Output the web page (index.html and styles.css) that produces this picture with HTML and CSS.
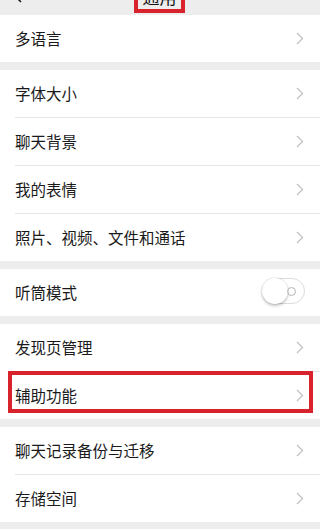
FILE: index.html
```html
<!DOCTYPE html>
<html lang="zh-CN">
<head>
<meta charset="utf-8">
<title>通用</title>
<link rel="stylesheet" href="styles.css">
</head>
<body>
<header class="navbar">
  <div class="nav-left">
    <svg class="back" width="10" height="18" viewBox="0 0 10 18"><polyline points="9,1 1,9 9,17" fill="none" stroke="#222" stroke-width="1.6"/></svg>
  </div>
  <div class="nav-title"><span>通用</span></div>
  <div class="nav-right"></div>
</header>

<section class="group">
  <div class="row"><span class="label">多语言</span><svg class="chev" width="8" height="13" viewBox="0 0 8 13"><polyline points="1,1 6.5,6.5 1,12" fill="none" stroke="#c2c2c2" stroke-width="1.3"/></svg></div>
</section>

<section class="group">
  <div class="row"><span class="label">字体大小</span><svg class="chev" width="8" height="13" viewBox="0 0 8 13"><polyline points="1,1 6.5,6.5 1,12" fill="none" stroke="#c2c2c2" stroke-width="1.3"/></svg></div>
  <div class="row"><span class="label">聊天背景</span><svg class="chev" width="8" height="13" viewBox="0 0 8 13"><polyline points="1,1 6.5,6.5 1,12" fill="none" stroke="#c2c2c2" stroke-width="1.3"/></svg></div>
  <div class="row"><span class="label">我的表情</span><svg class="chev" width="8" height="13" viewBox="0 0 8 13"><polyline points="1,1 6.5,6.5 1,12" fill="none" stroke="#c2c2c2" stroke-width="1.3"/></svg></div>
  <div class="row"><span class="label">照片、视频、文件和通话</span><svg class="chev" width="8" height="13" viewBox="0 0 8 13"><polyline points="1,1 6.5,6.5 1,12" fill="none" stroke="#c2c2c2" stroke-width="1.3"/></svg></div>
</section>

<section class="group">
  <div class="row"><span class="label">听筒模式</span>
    <span class="switch"><span class="knob"></span><span class="off-dot"></span></span>
  </div>
</section>

<section class="group">
  <div class="row"><span class="label">发现页管理</span><svg class="chev" width="8" height="13" viewBox="0 0 8 13"><polyline points="1,1 6.5,6.5 1,12" fill="none" stroke="#c2c2c2" stroke-width="1.3"/></svg></div>
  <div class="row highlighted"><span class="label">辅助功能</span><svg class="chev" width="8" height="13" viewBox="0 0 8 13"><polyline points="1,1 6.5,6.5 1,12" fill="none" stroke="#c2c2c2" stroke-width="1.3"/></svg><span class="mark"></span></div>
</section>

<section class="group">
  <div class="row"><span class="label">聊天记录备份与迁移</span><svg class="chev" width="8" height="13" viewBox="0 0 8 13"><polyline points="1,1 6.5,6.5 1,12" fill="none" stroke="#c2c2c2" stroke-width="1.3"/></svg></div>
  <div class="row"><span class="label">存储空间</span><svg class="chev" width="8" height="13" viewBox="0 0 8 13"><polyline points="1,1 6.5,6.5 1,12" fill="none" stroke="#c2c2c2" stroke-width="1.3"/></svg></div>
</section>
</body>
</html>
```

FILE: styles.css
```css
html, body {
  margin: 0;
  padding: 0;
}
body {
  background: #ededed;
  font-family: "Noto Sans CJK SC", "Noto Sans", sans-serif;
  color: #1a1a1a;
  width: 320px;
  height: 529px;
  overflow: hidden;
}
.navbar {
  height: 15px;
  display: grid;
  grid-template-columns: 1fr auto 1fr;
  overflow: hidden;
  background: #ededed;
}
.nav-left {
  position: relative;
}
.back {
  display: block;
  margin-left: 12px;
  margin-top: -15px;
}
.nav-title {
  display: flex;
  align-items: flex-end;
  justify-content: center;
  box-sizing: border-box;
  width: 51px;
  height: 43px;
  margin-top: -30px;
  border: 4px solid #d8232d;
  padding-bottom: 4px;
  font-size: 17px;
  line-height: 1;
  color: #111;
  margin-left: -1px;
}
.group {
  background: #fff;
  padding-left: 15px;
  margin-bottom: 8px;
}
.row {
  position: relative;
  display: flex;
  align-items: center;
  justify-content: space-between;
  height: 47px;
  padding-right: 16px;
  font-size: 15.5px;
}
.row + .row {
  border-top: 1px solid #e5e5e5;
}
.label {
  line-height: 1;
}
.chev {
  display: block;
}
.switch {
  position: relative;
  display: block;
  box-sizing: border-box;
  width: 43px;
  height: 26px;
  border: 1px solid #dcdcdc;
  border-radius: 13px;
  background: #fff;
  margin-right: -1px;
  margin-top: -3px;
}
.knob {
  position: absolute;
  left: -1px;
  top: -1px;
  width: 26px;
  height: 26px;
  border-radius: 50%;
  background: #fff;
  box-shadow: 0 2px 3px rgba(0,0,0,0.22), 0 0 0 1px rgba(0,0,0,0.06);
}
.off-dot {
  position: absolute;
  right: 8px;
  top: 8px;
  box-sizing: border-box;
  width: 9px;
  height: 9px;
  border-radius: 50%;
  border: 1.2px solid #b5b5b5;
}
.mark {
  position: absolute;
  left: -7px;
  top: -1px;
  width: 305px;
  height: 42px;
  box-sizing: border-box;
  border: 4px solid #d8232d;
  pointer-events: none;
}
```
